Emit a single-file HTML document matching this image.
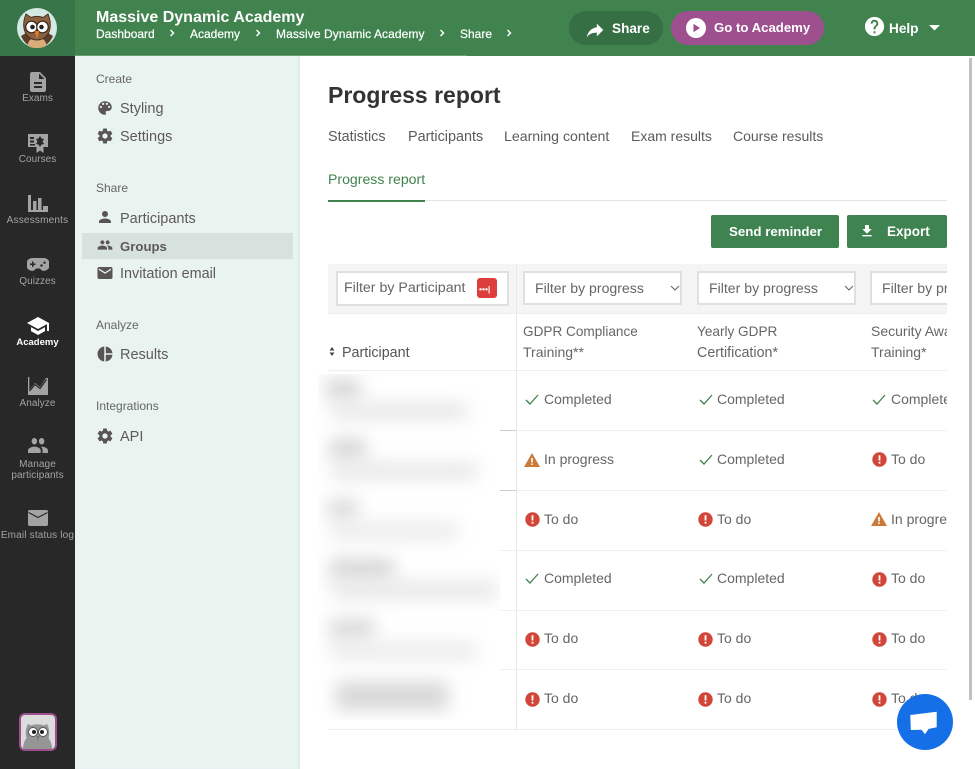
<!DOCTYPE html>
<html><head><meta charset="utf-8"><title>Progress report</title>
<style>
html,body{margin:0;padding:0;width:975px;height:769px;overflow:hidden;background:#fff;font-family:"Liberation Sans",sans-serif;color:#5f5a5a}
.a{position:absolute}
.t{position:absolute;white-space:nowrap;line-height:20px;height:20px}
svg{position:absolute;display:block}
.side{color:#a3a3a3;font-size:10px;text-align:center;width:75px;left:0;line-height:10.500px;height:auto;letter-spacing:.05px}
.n{font-size:14.500px;left:120px;color:#5f5a5a}
.h{font-size:12px;left:96px;color:#666}
.tab{font-size:14.400px;color:#5f5a5a;top:127px}
.cell{font-size:14px;color:#666}
.crumb{font-size:12px;color:#fff;top:24px;-webkit-text-stroke:.2px #fff}
.sel{position:absolute;top:271px;height:30px;width:155px;border:2px solid #e0e0e0;background:#fff;font-size:14.100px;color:#666;line-height:30px}
.sel span{margin-left:10px;white-space:nowrap}
.b{filter:blur(9px);position:absolute}
</style></head><body>

<!-- header -->
<div class="a" style="left:0;top:0;width:975px;height:56px;background:#41834f"></div>
<div class="a" style="left:0;top:0;width:75px;height:56px;background:#387548"></div>
<div class="a" style="left:75px;top:55px;width:392px;height:1px;background:#6a9e76"></div>

<svg style="left:17px;top:8px" width="40" height="40" viewBox="0 0 40 40">
<circle cx="20" cy="20" r="20" fill="#d4e9e4"/>
<path d="M4 28l5-3 22 0 5 3c-3 7-9 12-16 12S7 35 4 28z" fill="#5c3d2a"/>
<path d="M20 40c-5 0-8-1-9.500-3 1-5 5-8 9.500-8s8.500 3 9.500 8c-1.500 2-4.500 3-9.500 3z" fill="#d9ac7b"/>
<path d="M9 6l5 3.500c4-1.500 8-1.500 12 0L31 6c2 5 3 9 2 14-1 7-6 12-13 12S8 27 7 20C6 15 7 11 9 6z" fill="#8a6242" stroke="#4a3022" stroke-width="1"/>
<circle cx="14.500" cy="19" r="5.800" fill="#fff" stroke="#3a2518" stroke-width="1.200"/>
<circle cx="25.500" cy="19" r="5.800" fill="#fff" stroke="#3a2518" stroke-width="1.200"/>
<circle cx="15.500" cy="19" r="2.300" fill="#222"/><circle cx="24.500" cy="19" r="2.300" fill="#222"/>
<path d="M17.700 23h4.600L20 31z" fill="#e67a1c"/>
</svg>

<div class="t" style="left:96px;top:8px;font-size:16px;font-weight:bold;color:#fff">Massive Dynamic Academy</div>
<div class="t crumb" style="left:96px">Dashboard</div>
<svg style="left:169px;top:29px" width="7" height="8" viewBox="0 0 7 8"><path d="M1.500 1l3 3-3 3" fill="none" stroke="#fff" stroke-width="1.400"/></svg>
<div class="t crumb" style="left:190px">Academy</div>
<svg style="left:255px;top:29px" width="7" height="8" viewBox="0 0 7 8"><path d="M1.500 1l3 3-3 3" fill="none" stroke="#fff" stroke-width="1.400"/></svg>
<div class="t crumb" style="left:276px;letter-spacing:.08px">Massive Dynamic Academy</div>
<svg style="left:439px;top:29px" width="7" height="8" viewBox="0 0 7 8"><path d="M1.500 1l3 3-3 3" fill="none" stroke="#fff" stroke-width="1.400"/></svg>
<div class="t crumb" style="left:460px">Share</div>
<svg style="left:506px;top:29px" width="7" height="8" viewBox="0 0 7 8"><path d="M1.500 1l3 3-3 3" fill="none" stroke="#fff" stroke-width="1.400"/></svg>

<div class="a" style="left:569px;top:11px;width:94px;height:34px;border-radius:17px;background:#376f45"></div>
<svg style="left:584px;top:19px" width="22" height="22" viewBox="0 0 24 24"><path fill="#fff" d="M14 9V5l7 7-7 7v-4.100c-5 0-8.500 1.600-11 5.100 1-5 4-10 11-11z"/></svg>
<div class="t" style="left:612px;top:19px;font-size:13.600px;font-weight:bold;color:#fff">Share</div>
<div class="a" style="left:671px;top:11px;width:153px;height:34px;border-radius:17px;background:#9e4f8e"></div>
<svg style="left:686px;top:18px" width="20" height="20" viewBox="0 0 20 20"><circle cx="10" cy="10" r="10" fill="#fff"/><path d="M7.500 5.800v8.400L14 10z" fill="#9e4f8e"/></svg>
<div class="t" style="left:714px;top:18px;font-size:13.200px;font-weight:bold;color:#fff">Go to Academy</div>
<svg style="left:863px;top:15px" width="23" height="23" viewBox="0 0 24 24"><path fill="#fff" d="M12 2C6.480 2 2 6.480 2 12s4.480 10 10 10 10-4.480 10-10S17.520 2 12 2zm1 17h-2v-2h2v2zm2.070-7.750l-.9.920C13.450 12.900 13 13.500 13 15h-2v-.5c0-1.100.45-2.100 1.170-2.830l1.240-1.260c.37-.36.59-.86.59-1.410 0-1.100-.9-2-2-2s-2 .9-2 2H8c0-2.210 1.790-4 4-4s4 1.790 4 4c0 .88-.36 1.680-.93 2.250z"/></svg>
<div class="t" style="left:889px;top:19px;font-size:13.600px;font-weight:bold;color:#fff">Help</div>
<svg style="left:929px;top:25px" width="11" height="6" viewBox="0 0 11 6"><path d="M0 0h11L5.500 5.500z" fill="#fff"/></svg>

<!-- dark sidebar -->
<div class="a" style="left:0;top:56px;width:75px;height:713px;background:#282828"></div>
<svg style="left:26px;top:70px" width="24" height="24" viewBox="0 0 24 24"><path fill="#a3a3a3" d="M14 2H6c-1.100 0-2 .9-2 2v16c0 1.100.9 2 2 2h12c1.100 0 2-.9 2-2V8l-6-6zm2 16H8v-2h8v2zm0-4H8v-2h8v2zm-3-5V3.500L18.500 9H13z"/></svg>
<div class="t side" style="top:94px">Exams</div>
<svg style="left:28px;top:134px" width="20" height="19" viewBox="0 0 20 19"><path fill="#a3a3a3" fill-rule="evenodd" d="M0 0h20v13h-4.500v6L12 16.500 8.500 19v-6H0zM2 3v2h4V3zm0 3.500v2h4v-2zM2 10v1.500h5V10zm10-8l-1.500 2.500L8 5l1.500 2.500L8 10l2.500.5L12 13l1.500-2.500L16 10l-1.500-2.500L16 5l-2.500-.5z"/></svg>
<div class="t side" style="top:155px">Courses</div>
<svg style="left:28px;top:195px" width="20" height="17" viewBox="0 0 20 17"><path fill="#a3a3a3" d="M0 0h3v17H0zM0 15h20v2H0zM5 6h3.500v11H5zM10 3h3.500v14H10zM15 11h5v6h-5z"/></svg>
<div class="t side" style="top:216px;letter-spacing:.2px">Assessments</div>
<svg style="left:27px;top:258px" width="22" height="13" viewBox="0 0 22 13"><path fill="#a3a3a3" fill-rule="evenodd" d="M6 0h10a6 6 0 0 1 1 12.900c-2 0-3-1-4-2.400H9c-1 1.400-2 2.400-4 2.400A6 6 0 0 1 6 0zM5 3.500v2H3V7h2v2h1.500V7h2V5.500h-2v-2zM14.500 6.300a1.200 1.200 0 1 0 .01 0zM17.500 3.500a1.200 1.200 0 1 0 .01 0z"/></svg>
<div class="t side" style="top:277px">Quizzes</div>
<svg style="left:26px;top:314px" width="24" height="24" viewBox="0 0 24 24"><path fill="#fff" d="M5 13.180v4L12 21l7-3.820v-4L12 17l-7-3.820zM12 3L1 9l11 6 9-4.910V17h2V9L12 3z"/></svg>
<div class="t side" style="top:338px;color:#fff;font-weight:bold;font-size:9.500px;letter-spacing:0">Academy</div>
<svg style="left:28px;top:377px" width="20" height="18" viewBox="0 0 20 18"><path fill="#a3a3a3" d="M0 0h1.300v13L7 6l5 4 6-9 2 0v17H0z"/><path d="M1.500 14L7 7.500l5 4 6.500-9" stroke="#282828" stroke-width="1.300" fill="none"/></svg>
<div class="t side" style="top:399px">Analyze</div>
<svg style="left:28px;top:438px" width="20" height="15" viewBox="1 5 22 14" preserveAspectRatio="none"><path fill="#a3a3a3" d="M16 11c1.660 0 2.990-1.340 2.990-3S17.660 5 16 5c-1.660 0-3 1.340-3 3s1.340 3 3 3zm-8 0c1.660 0 2.990-1.340 2.990-3S9.660 5 8 5C6.340 5 5 6.340 5 8s1.340 3 3 3zm0 2c-2.330 0-7 1.170-7 3.500V19h14v-2.500c0-2.330-4.670-3.500-7-3.500zm8 0c-.29 0-.62.02-.97.05 1.160.84 1.970 1.970 1.970 3.450V19h6v-2.500c0-2.330-4.670-3.500-7-3.500z"/></svg>
<div class="t side" style="top:460px;letter-spacing:.1px">Manage<br>participants</div>
<svg style="left:28px;top:510px" width="20" height="16" viewBox="0 0 20 16"><path fill="#a3a3a3" d="M1.500 0h17c.8 0 1.500.7 1.500 1.500v13c0 .8-.7 1.500-1.500 1.500h-17C.7 16 0 15.300 0 14.500v-13C0 .7.700 0 1.500 0z"/><path d="M.5 2.500l9.500 5 9.500-5" fill="none" stroke="#282828" stroke-width="1.200"/></svg>
<div class="t side" style="top:531px;letter-spacing:.17px">Email status log</div>

<svg style="left:19px;top:713px" width="38" height="38" viewBox="0 0 38 38">
<rect x="1" y="1" width="36" height="36" rx="5" fill="#dcdcdc" stroke="#9c4f8f" stroke-width="2"/>
<path d="M4 36c0-5 1.500-8 3.500-11-1.500-6-.5-10 1.500-14l3 1.500c4-1.500 9-1.500 13 0l3-1.500c2 4 3 8 1.500 14 2 3 3.500 6 3.500 11z" fill="#959595"/>
<circle cx="14" cy="19" r="4.500" fill="#fff" stroke="#555"/><circle cx="24" cy="19" r="4.500" fill="#fff" stroke="#555"/>
<circle cx="15" cy="19" r="2" fill="#222"/><circle cx="23" cy="19" r="2" fill="#222"/>
<path d="M17.500 23h3L19 28z" fill="#777"/>
</svg>

<!-- sub nav -->
<div class="a" style="left:75px;top:56px;width:225px;height:713px;background:#e9f3f0;box-shadow:inset -2px 0 2px -1px rgba(0,0,0,.06)"></div>
<div class="a" style="left:82px;top:233px;width:211px;height:26px;background:#d7e1dd"></div>
<div class="t h" style="top:69px">Create</div>
<svg style="left:95.500px;top:99px" width="18" height="18" viewBox="0 0 24 24"><path fill="#5a5555" d="M12 3c-4.970 0-9 4.030-9 9s4.030 9 9 9c.83 0 1.500-.67 1.500-1.500 0-.39-.15-.74-.39-1.010-.23-.26-.38-.61-.38-.99 0-.83.67-1.500 1.500-1.500H16c2.760 0 5-2.240 5-5 0-4.420-4.030-8-9-8zm-5.500 9c-.83 0-1.500-.67-1.500-1.500S5.670 9 6.500 9 8 9.670 8 10.500 7.330 12 6.500 12zm3-4C8.670 8 8 7.330 8 6.500S8.670 5 9.500 5s1.500.67 1.500 1.500S10.330 8 9.500 8zm5 0c-.83 0-1.500-.67-1.500-1.500S13.670 5 14.500 5s1.500.67 1.500 1.500S15.330 8 14.500 8zm3 4c-.83 0-1.500-.67-1.500-1.500S16.670 9 17.500 9s1.500.67 1.500 1.500-.67 1.500-1.500 1.500z"/></svg>
<div class="t n" style="top:99px">Styling</div>
<svg style="left:95.500px;top:127px" width="18" height="18" viewBox="0 0 24 24"><path fill="#5a5555" d="M19.430 12.980c.04-.32.07-.64.07-.98s-.03-.66-.07-.98l2.110-1.650c.19-.15.24-.42.12-.64l-2-3.460c-.12-.22-.39-.3-.61-.22l-2.490 1c-.52-.4-1.080-.73-1.690-.98l-.38-2.650C14.460 2.180 14.250 2 14 2h-4c-.25 0-.46.18-.49.42l-.38 2.650c-.61.25-1.170.59-1.690.98l-2.490-1c-.23-.09-.49 0-.61.22l-2 3.460c-.13.22-.07.49.12.64l2.110 1.650c-.04.32-.07.65-.07.98s.03.66.07.98l-2.110 1.650c-.19.15-.24.42-.12.64l2 3.460c.12.22.39.3.61.22l2.490-1c.52.4 1.080.73 1.690.98l.38 2.650c.03.24.24.42.49.42h4c.25 0 .46-.18.49-.42l.38-2.650c.61-.25 1.170-.59 1.690-.98l2.490 1c.23.09.49 0 .61-.22l2-3.460c.12-.22.07-.49-.12-.64l-2.110-1.650zM12 15.500c-1.930 0-3.500-1.570-3.500-3.500s1.570-3.500 3.500-3.500 3.500 1.570 3.500 3.500-1.570 3.500-3.500 3.500z"/></svg>
<div class="t n" style="top:127px">Settings</div>
<div class="t h" style="top:178px">Share</div>
<svg style="left:95.500px;top:208px" width="18" height="18" viewBox="0 0 24 24"><path fill="#5a5555" d="M12 12c2.210 0 4-1.790 4-4s-1.790-4-4-4-4 1.790-4 4 1.790 4 4 4zm0 2c-2.670 0-8 1.340-8 4v2h16v-2c0-2.660-5.330-4-8-4z"/></svg>
<div class="t n" style="top:209px">Participants</div>
<svg style="left:96.500px;top:237px" width="16" height="16" viewBox="0 0 24 24"><path fill="#5a5555" d="M16 11c1.660 0 2.990-1.340 2.990-3S17.660 5 16 5c-1.660 0-3 1.340-3 3s1.340 3 3 3zm-8 0c1.660 0 2.990-1.340 2.990-3S9.660 5 8 5C6.340 5 5 6.340 5 8s1.340 3 3 3zm0 2c-2.330 0-7 1.170-7 3.500V19h14v-2.500c0-2.330-4.670-3.500-7-3.500zm8 0c-.29 0-.62.02-.97.05 1.160.84 1.970 1.970 1.970 3.450V19h6v-2.500c0-2.330-4.670-3.500-7-3.500z"/></svg>
<div class="t n" style="top:237px;font-weight:bold;font-size:13.200px">Groups</div>
<svg style="left:95.500px;top:264px" width="18" height="18" viewBox="0 0 24 24"><path fill="#5a5555" d="M20 4H4c-1.100 0-1.990.9-1.990 2L2 18c0 1.100.9 2 2 2h16c1.100 0 2-.9 2-2V6c0-1.100-.9-2-2-2zm0 4l-8 5-8-5V6l8 5 8-5v2z"/></svg>
<div class="t n" style="top:264px;font-size:14.400px">Invitation email</div>
<div class="t h" style="top:315px">Analyze</div>
<svg style="left:95.500px;top:345px" width="18" height="18" viewBox="0 0 24 24"><path fill="#5a5555" d="M11 2v20c-5.070-.5-9-4.790-9-10s3.930-9.500 9-10zm2.030 0v8.990H22c-.47-4.740-4.240-8.520-8.970-8.990zm0 11.010V22c4.740-.47 8.500-4.250 8.970-8.990h-8.970z"/></svg>
<div class="t n" style="top:345px">Results</div>
<div class="t h" style="top:396px">Integrations</div>
<svg style="left:95.500px;top:427px" width="18" height="18" viewBox="0 0 24 24"><path fill="#5a5555" d="M19.430 12.980c.04-.32.07-.64.07-.98s-.03-.66-.07-.98l2.110-1.650c.19-.15.24-.42.12-.64l-2-3.460c-.12-.22-.39-.3-.61-.22l-2.490 1c-.52-.4-1.080-.73-1.690-.98l-.38-2.650C14.460 2.180 14.250 2 14 2h-4c-.25 0-.46.18-.49.42l-.38 2.650c-.61.25-1.170.59-1.690.98l-2.490-1c-.23-.09-.49 0-.61.22l-2 3.460c-.13.22-.07.49.12.64l2.110 1.650c-.04.32-.07.65-.07.98s.03.66.07.98l-2.110 1.650c-.19.15-.24.42-.12.64l2 3.460c.12.22.39.3.61.22l2.490-1c.52.4 1.080.73 1.690.98l.38 2.650c.03.24.24.42.49.42h4c.25 0 .46-.18.49-.42l.38-2.650c.61-.25 1.170-.59 1.690-.98l2.490 1c.23.09.49 0 .61-.22l2-3.460c.12-.22.07-.49-.12-.64l-2.110-1.650zM12 15.500c-1.930 0-3.500-1.570-3.500-3.500s1.570-3.500 3.500-3.500 3.500 1.570 3.500 3.500-1.570 3.500-3.500 3.500z"/></svg>
<div class="t n" style="top:427px">API</div>

<!-- main -->
<div class="t" style="left:328px;top:85px;font-size:23px;font-weight:bold;color:#333">Progress report</div>
<div class="t tab" style="left:328px">Statistics</div>
<div class="t tab" style="left:408px">Participants</div>
<div class="t tab" style="left:504px;top:126px;font-size:14.150px">Learning content</div>
<div class="t tab" style="left:631px;top:126px;font-size:14px">Exam results</div>
<div class="t tab" style="left:733px;top:126px;font-size:14px">Course results</div>
<div class="t tab" style="left:328px;top:169px;color:#41834f;font-size:14.100px">Progress report</div>
<div class="a" style="left:328px;top:200px;width:619px;height:1px;background:#e4e4e4"></div>
<div class="a" style="left:328px;top:200px;width:97px;height:2px;background:#41834f"></div>

<div class="a" style="left:711px;top:215px;width:128px;height:33px;background:#3f8350;border-radius:2px"></div>
<div class="t" style="left:729px;top:222px;font-size:13.300px;font-weight:bold;color:#fff">Send reminder</div>
<div class="a" style="left:847px;top:215px;width:100px;height:33px;background:#3f8350;border-radius:2px"></div>
<svg style="left:859px;top:223px" width="16" height="16" viewBox="0 0 24 24"><path fill="#fff" d="M19 9h-4V3H9v6H5l7 7 7-7zM5 18v2h14v-2H5z"/></svg>
<div class="t" style="left:887px;top:222px;font-size:13.500px;font-weight:bold;color:#fff">Export</div>

<!-- table -->
<div class="a" style="left:328px;top:264px;width:619px;height:466px;overflow:hidden">
  <div class="a" style="left:0;top:0;width:619px;height:49px;background:#f5f5f5;border-bottom:1px solid #eee"></div>
  <div class="a" style="left:188px;top:0;width:1px;height:466px;background:#e8e8e8"></div>
  <div class="a" style="left:0;top:106px;width:619px;height:1px;background:#eee"></div>
  <div class="a" style="left:188px;top:166px;width:431px;height:1px;background:#f0f0f0"></div>
  <div class="a" style="left:188px;top:226px;width:431px;height:1px;background:#f0f0f0"></div>
  <div class="a" style="left:172px;top:286px;width:447px;height:1px;background:#f0f0f0"></div>
  <div class="a" style="left:172px;top:346px;width:447px;height:1px;background:#f0f0f0"></div>
  <div class="a" style="left:172px;top:405px;width:447px;height:1px;background:#f0f0f0"></div>
  <div class="a" style="left:0;top:465px;width:619px;height:1px;background:#eee"></div>
  <div class="a" style="left:172px;top:166px;width:16px;height:1px;background:#ccc"></div>
  <div class="a" style="left:172px;top:226px;width:16px;height:1px;background:#ccc"></div>

  <div class="a" style="left:8px;top:7px;width:169px;height:31px;border:2px solid #e0e0e0;background:#fff"></div>
  <div class="t" style="left:16px;top:14px;font-size:14.200px;color:#666">Filter by Participant</div>
  <div class="a" style="left:149px;top:14px;width:20px;height:20px;background:#de3e3b;border-radius:3px"></div>
  <div class="t" style="left:151px;top:15px;color:#fff;font-size:8.500px;font-weight:bold;letter-spacing:0;line-height:20px">•••|</div>

  <div class="sel" style="left:195px;top:7px"><span>Filter by progress</span></div>
  <svg style="left:342px;top:21px" width="10" height="6" viewBox="0 0 10 6"><path d="M1 1l4 4 4-4" fill="none" stroke="#666" stroke-width="1.100"/></svg>
  <div class="sel" style="left:369px;top:7px"><span>Filter by progress</span></div>
  <svg style="left:516px;top:21px" width="10" height="6" viewBox="0 0 10 6"><path d="M1 1l4 4 4-4" fill="none" stroke="#666" stroke-width="1.100"/></svg>
  <div class="sel" style="left:542px;top:7px"><span>Filter by progress</span></div>

  <svg style="left:1px;top:83px" width="6" height="9" viewBox="0 0 6 9"><path d="M3 0l2.500 3.500h-5zM3 9L.5 5.500h5z" fill="#444"/></svg>
  <div class="t" style="left:14px;top:79px;font-size:14.300px;color:#555">Participant</div>
  <div class="t" style="left:195px;top:58px;font-size:13.600px;color:#666">GDPR Compliance</div>
  <div class="t" style="left:195px;top:78px;font-size:14px;color:#666">Training**</div>
  <div class="t" style="left:369px;top:58px;font-size:13.600px;color:#666">Yearly GDPR</div>
  <div class="t" style="left:369px;top:79px;font-size:14.300px;color:#666">Certification*</div>
  <div class="t" style="left:543px;top:57px;font-size:14px;color:#666">Security Awareness</div>
  <div class="t" style="left:543px;top:78px;font-size:14px;color:#666">Training*</div>

  <!-- row 1 -->
  <svg style="left:197px;top:130px" width="14" height="11" viewBox="0 0 14 11"><path d="M1 6l4 4 8-9" fill="none" stroke="#41834f" stroke-width="1.300"/></svg>
  <div class="t cell" style="left:216px;top:125px">Completed</div>
  <svg style="left:371px;top:130px" width="14" height="11" viewBox="0 0 14 11"><path d="M1 6l4 4 8-9" fill="none" stroke="#41834f" stroke-width="1.300"/></svg>
  <div class="t cell" style="left:389px;top:125px">Completed</div>
  <svg style="left:544px;top:130px" width="14" height="11" viewBox="0 0 14 11"><path d="M1 6l4 4 8-9" fill="none" stroke="#41834f" stroke-width="1.300"/></svg>
  <div class="t cell" style="left:563px;top:125px">Completed</div>
  <!-- row 2 -->
  <svg style="left:196px;top:189px" width="16" height="14" viewBox="0 0 16 14"><path fill-rule="evenodd" d="M8 0l8 14H0zM7.200 5v4.500h1.600V5zm0 5.500V12h1.600v-1.500z" fill="#cc7a3a"/></svg>
  <div class="t cell" style="left:216px;top:185px">In progress</div>
  <svg style="left:371px;top:190px" width="14" height="11" viewBox="0 0 14 11"><path d="M1 6l4 4 8-9" fill="none" stroke="#41834f" stroke-width="1.300"/></svg>
  <div class="t cell" style="left:389px;top:185px">Completed</div>
  <svg style="left:544px;top:188px" width="15" height="15" viewBox="0 0 15 15"><circle cx="7.500" cy="7.500" r="7.200" fill="#d2463a"/><path d="M6.600 3.300h1.800v5.200H6.600zM6.600 9.800h1.800v1.800H6.600z" fill="#fff"/></svg>
  <div class="t cell" style="left:563px;top:185px">To do</div>
  <!-- row 3 -->
  <svg style="left:196.500px;top:248px" width="15" height="15" viewBox="0 0 15 15"><circle cx="7.500" cy="7.500" r="7.200" fill="#d2463a"/><path d="M6.600 3.300h1.800v5.200H6.600zM6.600 9.800h1.800v1.800H6.600z" fill="#fff"/></svg>
  <div class="t cell" style="left:216px;top:245px">To do</div>
  <svg style="left:370px;top:248px" width="15" height="15" viewBox="0 0 15 15"><circle cx="7.500" cy="7.500" r="7.200" fill="#d2463a"/><path d="M6.600 3.300h1.800v5.200H6.600zM6.600 9.800h1.800v1.800H6.600z" fill="#fff"/></svg>
  <div class="t cell" style="left:389px;top:245px">To do</div>
  <svg style="left:543px;top:248px" width="16" height="14" viewBox="0 0 16 14"><path fill-rule="evenodd" d="M8 0l8 14H0zM7.200 5v4.500h1.600V5zm0 5.500V12h1.600v-1.500z" fill="#cc7a3a"/></svg>
  <div class="t cell" style="left:563px;top:245px">In progress</div>
  <!-- row 4 -->
  <svg style="left:197px;top:309px" width="14" height="11" viewBox="0 0 14 11"><path d="M1 6l4 4 8-9" fill="none" stroke="#41834f" stroke-width="1.300"/></svg>
  <div class="t cell" style="left:216px;top:304px">Completed</div>
  <svg style="left:371px;top:309px" width="14" height="11" viewBox="0 0 14 11"><path d="M1 6l4 4 8-9" fill="none" stroke="#41834f" stroke-width="1.300"/></svg>
  <div class="t cell" style="left:389px;top:304px">Completed</div>
  <svg style="left:544px;top:308px" width="15" height="15" viewBox="0 0 15 15"><circle cx="7.500" cy="7.500" r="7.200" fill="#d2463a"/><path d="M6.600 3.300h1.800v5.200H6.600zM6.600 9.800h1.800v1.800H6.600z" fill="#fff"/></svg>
  <div class="t cell" style="left:563px;top:304px">To do</div>
  <!-- row 5 -->
  <svg style="left:196.500px;top:368px" width="15" height="15" viewBox="0 0 15 15"><circle cx="7.500" cy="7.500" r="7.200" fill="#d2463a"/><path d="M6.600 3.300h1.800v5.200H6.600zM6.600 9.800h1.800v1.800H6.600z" fill="#fff"/></svg>
  <div class="t cell" style="left:216px;top:364px">To do</div>
  <svg style="left:370px;top:368px" width="15" height="15" viewBox="0 0 15 15"><circle cx="7.500" cy="7.500" r="7.200" fill="#d2463a"/><path d="M6.600 3.300h1.800v5.200H6.600zM6.600 9.800h1.800v1.800H6.600z" fill="#fff"/></svg>
  <div class="t cell" style="left:389px;top:364px">To do</div>
  <svg style="left:544px;top:368px" width="15" height="15" viewBox="0 0 15 15"><circle cx="7.500" cy="7.500" r="7.200" fill="#d2463a"/><path d="M6.600 3.300h1.800v5.200H6.600zM6.600 9.800h1.800v1.800H6.600z" fill="#fff"/></svg>
  <div class="t cell" style="left:563px;top:364px">To do</div>
  <!-- row 6 -->
  <svg style="left:196.500px;top:428px" width="15" height="15" viewBox="0 0 15 15"><circle cx="7.500" cy="7.500" r="7.200" fill="#d2463a"/><path d="M6.600 3.300h1.800v5.200H6.600zM6.600 9.800h1.800v1.800H6.600z" fill="#fff"/></svg>
  <div class="t cell" style="left:216px;top:424px">To do</div>
  <svg style="left:370px;top:428px" width="15" height="15" viewBox="0 0 15 15"><circle cx="7.500" cy="7.500" r="7.200" fill="#d2463a"/><path d="M6.600 3.300h1.800v5.200H6.600zM6.600 9.800h1.800v1.800H6.600z" fill="#fff"/></svg>
  <div class="t cell" style="left:389px;top:424px">To do</div>
  <svg style="left:544px;top:428px" width="15" height="15" viewBox="0 0 15 15"><circle cx="7.500" cy="7.500" r="7.200" fill="#d2463a"/><path d="M6.600 3.300h1.800v5.200H6.600zM6.600 9.800h1.800v1.800H6.600z" fill="#fff"/></svg>
  <div class="t cell" style="left:563px;top:424px">To do</div>
</div>

<!-- blurred names -->
<div class="a" style="left:318px;top:374px;width:182px;height:346px;overflow:hidden;background:#fff">
  <div class="b" style="left:8px;top:6px;width:34px;height:18px;background:#d0d0d0"></div>
  <div class="b" style="left:14px;top:30px;width:135px;height:14px;background:#e2e2e2"></div>
  <div class="b" style="left:12px;top:66px;width:36px;height:18px;background:#d0d0d0"></div>
  <div class="b" style="left:14px;top:90px;width:145px;height:14px;background:#e2e2e2"></div>
  <div class="b" style="left:10px;top:126px;width:30px;height:18px;background:#d6d6d6"></div>
  <div class="b" style="left:14px;top:150px;width:125px;height:14px;background:#e6e6e6"></div>
  <div class="b" style="left:12px;top:186px;width:64px;height:18px;background:#d0d0d0"></div>
  <div class="b" style="left:14px;top:208px;width:165px;height:16px;background:#e4e4e4"></div>
  <div class="b" style="left:12px;top:246px;width:44px;height:18px;background:#d4d4d4"></div>
  <div class="b" style="left:14px;top:270px;width:145px;height:14px;background:#e6e6e6"></div>
  <div class="b" style="left:18px;top:308px;width:112px;height:28px;background:#d6d6d6"></div>
</div>

<!-- scrollbar + chat -->
<div class="a" style="left:969px;top:58px;width:3px;height:642px;background:#c1c1c1"></div>
<div class="a" style="left:897px;top:693.500px;width:56px;height:56px;border-radius:50%;background:#1570e8"></div>
<svg style="left:909px;top:711px" width="30" height="25" viewBox="0 0 30 25"><path d="M1.300 4L27.700.7v15.600l-8.200 1.700-3.500 5.300-3.500-4.500L1.800 19z" fill="#fff"/></svg>
</body></html>
